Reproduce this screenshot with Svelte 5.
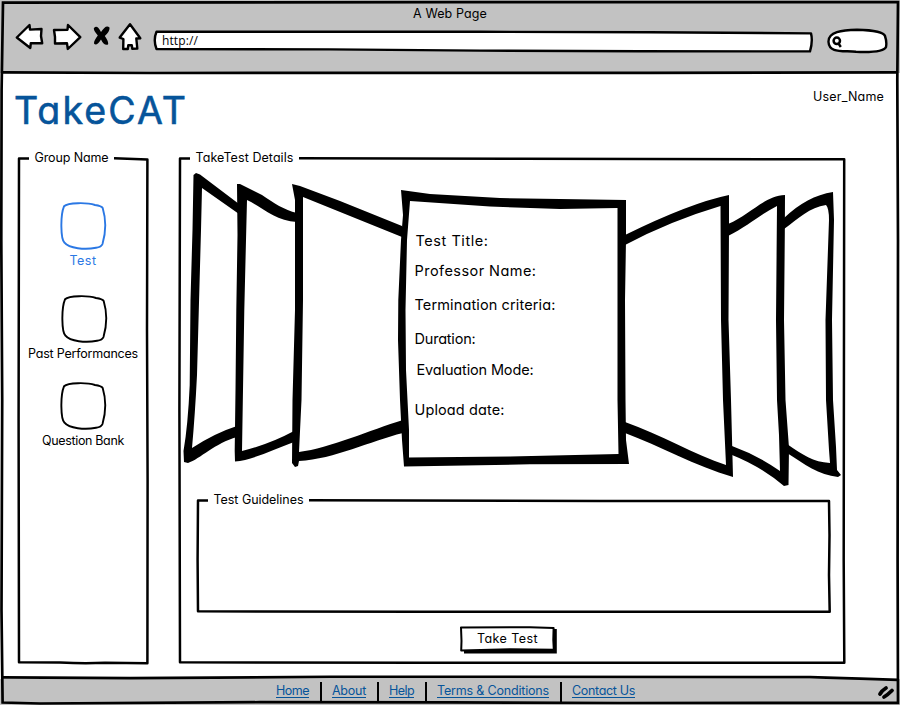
<script>
  const sections = [
    { label: 'Test', width: 27, gap: 0, shift: 0, active: true },
    { label: 'Past Performances', width: 110, gap: 27, shift: 1, active: false },
    { label: 'Question Bank', width: 82, gap: 21, shift: 0, active: false },
  ];

  const details = [
    { label: 'Test Title:', width: 73, indent: 1, gap: 0 },
    { label: 'Professor Name:', width: 122, indent: 0, gap: 10 },
    { label: 'Termination criteria:', width: 141, indent: 0, gap: 14 },
    { label: 'Duration:', width: 61, indent: 0, gap: 14 },
    { label: 'Evaluation Mode:', width: 117, indent: 2, gap: 11 },
    { label: 'Upload date:', width: 90, indent: 0, gap: 20 },
  ];

  const links = [
    { label: 'Home', width: 33 },
    { label: 'About', width: 34 },
    { label: 'Help', width: 25 },
    { label: 'Terms & Conditions', width: 112 },
    { label: 'Contact Us', width: 63 },
  ];

  // Spreads the letters of a label so that it fills the given width.
  function fit(node, width) {
    const natural = node.getBoundingClientRect().width;
    const count = node.textContent.length;
    node.style.letterSpacing = `${(width - natural) / count}px`;
    node.style.width = `${width}px`;
  }
</script>

<div class="page">
  <header>
    <div class="title"><span class="t" use:fit={74}>A Web Page</span></div>
    <div class="toolbar">
      <svg class="back" width="29" height="28" viewBox="15 23 29 28">
        <path class="ink" d="M16.8 37.5 L29.5 25 L30 29.6 L41.5 29 L41 36 L42.2 43.3 L30.8 43.2 L30.3 48 Z" />
      </svg>
      <svg class="forward" width="30" height="29" viewBox="52 22 30 29">
        <path class="ink" d="M54 30 L67.5 29.7 L68 25 L80.3 37.2 L67.8 49 L67 43.3 L55 43.5 L55 37 Z" />
      </svg>
      <svg class="stop" width="18" height="21" viewBox="93 25 18 21">
        <path d="M94 28 Q97 24 101 32 Q106 24 109.5 27.5 Q110 31 104.8 36 Q109 42 108 44.5 Q104 46 101 39.5 Q97 46 94.3 44 Q93 42 97.8 35.5 Q93 30 94 28Z" />
      </svg>
      <svg class="home" width="24" height="29" viewBox="118 22 24 29">
        <path class="ink" d="M130 24.3 L140.3 38.3 L136.3 38.5 L137.3 48.5 L132.3 48.8 L131.8 45.2 L128.3 45.2 L127.8 49 L123.2 49 L123.4 39 L119.7 37.6 Z" />
      </svg>
      <div class="url">
        <svg class="sketch" viewBox="153 30 660 23">
          <path class="ink" d="M156.5 31.8 L480 31.8 L650 32.2 L811 33.4 Q813 41 810 51.4 L640 51.3 L480 50.6 L330 49.4 L156.5 49 Q153 40 156.5 31.8Z" />
        </svg>
        <span class="http" use:fit={36}>http://</span>
      </div>
      <svg class="search" width="61" height="27" viewBox="827 27 61 27">
        <path class="ink" d="M828.5 42 C828 32 842 30 857 29.7 C875 30 884 33 885 36 Q887 42 886 47 C884 52 868 52.3 856 51.8 C842 50.5 829 53 828.5 42Z" />
        <circle cx="836.8" cy="40.8" r="3.2" fill="#fff" stroke="#000" stroke-width="2.5" />
        <path d="M838.5 43.5 L840.8 47" stroke="#000" stroke-width="2.4" />
      </svg>
    </div>
  </header>

  <main>
    <div class="masthead">
      <h1><span class="t" use:fit={174}>TakeCAT</span></h1>
      <span class="t user" use:fit={71}>User_Name</span>
    </div>

    <div class="columns">
      <nav class="panel group">
        <svg class="sketch" viewBox="18 150 130 514">
          <path class="line" d="M29 158.4 H19 L18.6 420 L19 662.3 L60 662.6 Q85 663.8 105 662.8 L147.4 663.2 L147.6 480 L147 330 L147.4 159.5 L114 158.3" />
        </svg>
        <div class="legend"><span class="t" use:fit={74}>Group Name</span></div>
        <ul>
          {#each sections as s}
            <li class:active={s.active} style:margin-top="{s.gap}px">
              <svg width="47" height="49" viewBox="60 201 47 49" style:margin-left="{s.shift * 2}px">
                <path d="M64 206.3 C68 202.5 87 202.3 95 205 Q101.5 206 102.7 208 C106 219 106 232 102.5 244 Q101.5 247 96 247.8 C85 250 69 248.5 64.5 242.7 C60.5 239 60.3 215 64 206.3Z" />
              </svg>
              <span class="t" use:fit={s.width}>{s.label}</span>
            </li>
          {/each}
        </ul>
      </nav>

      <section class="panel details">
        <svg class="sketch" viewBox="179 150 666 514">
          <path class="line" d="M190 158.4 H180 L179.4 410 L180 662.3 L420 662.8 L844.3 662.8 L843.7 560 L844.2 159.3 L520 158.8 L299 158.3" />
        </svg>
        <div class="legend"><span class="t" use:fit={98}>TakeTest Details</span></div>

        <div class="carousel">
          <svg class="sketch" viewBox="179 166 666 325">
            <g class="left">
              <path d="M193.5 175 L196 173 L200 174.5 L239 204 V214 L202 188 L201 230 L198.8 310 L197 375 Q195 415 192 448 Q215 433 237 426 V437 C215 443 200 459 188 463 L184 462 L183.5 451 Q188 425 189.7 385 L190.5 300 L192.5 230Z" />
              <path d="M237 184 L240 184 L262 195 C274 203 284 210 297 213 V222 C275 221 262 207 247 200 L246 240 L244.3 310 L242 451 Q270 444 294 431 V442 C273 450 252 460 235 461.5 L234.7 451 L235.5 390 L236.3 310 L237.5 235Z" />
              <path d="M292 184 L300 186 L340 201 L402 226 V237 L350 216 L303 197 L303 300 L301.5 400 L299 452 C330 448 370 430 403 420 V433 C370 441 335 459 299 461 L298 466 L295 467 L292 463 L292.5 400 L295 310 L295 200Z" />
            </g>
            <g class="right">
              <path d="M625 235 Q690 203 729 195 L729 230 L728.5 320 L731 400 L733 477 C695 466 660 446 625 433 V422 C660 434 695 455 726 465 L723 400 L721 320 L720.5 206 Q670 221 625 245Z" />
              <path d="M728 224 C750 215 764 196 785 195 L784.8 235 L784 320 L785.5 400 L789 448 L788.5 485 L784 486 Q760 466 732 455 V446 Q757 455 780 471 L779 435 L777 400 L776 320 L777 206 C761 214 748 226 728 236Z" />
              <path d="M784 218 C800 203 815 195 833 192 L834 220 L832 320 L833 400 L836 447 L837 470 L841 475 L838 477 C819 475 804 464 787 453 V444 C803 455 813 462 830 463 L829 450 L826 400 L825.5 320 L829 220 Q829 208 826 205 C810 207 798 219 784 229Z" />
            </g>
            <path class="center" fill-rule="evenodd" d="M401 190 L430 194 L500 198 L560 199 L626 200 L626 240 L625 300 L625.5 400 L626 440 L629 464 L530 464.3 L404 466.5 L402 440 L400 400 L398 340 L398.3 300 L401 240 L403 215Z M410 201 L407 240 L405.5 310 L406 370 L409 430 L409 457.5 L510 456.5 L618.5 454 L617.5 400 L617.5 208 L560 209 L490 206.5Z" />
          </svg>
          <dl>
            {#each details as d}
              <dt style:margin-top="{d.gap}px" style:padding-left="{d.indent}px"><span class="t" use:fit={d.width}>{d.label}</span></dt>
            {/each}
          </dl>
        </div>

        <div class="panel guidelines">
          <svg class="sketch" viewBox="197 492 633 120">
            <path class="line" d="M208 500.4 H198 L197.6 560 L198 611.3 L420 611.8 L829.7 611.8 L829 575 L829.5 535 L829 501 L600 500.9 L309 500.2" />
          </svg>
          <div class="legend"><span class="t" use:fit={90}>Test Guidelines</span></div>
        </div>

        <button>
          <svg class="sketch" viewBox="460 626 97 28">
            <path d="M464 629 H556.8 V653.5 H464Z" />
            <path class="line face" d="M461 627.5 L530 627.3 L553.6 628 L553.3 640 L553.8 649.8 L510 649.3 L461.2 650.5 L461.5 641Z" />
          </svg>
          <span class="t" use:fit={61}>Take Test</span>
        </button>
      </section>
    </div>
  </main>

  <footer>
    {#each links as l}
      <div class="link"><a class="t" href="#top" use:fit={l.width}>{l.label}</a></div>
    {/each}
  </footer>

  <svg class="sketch frame" viewBox="0 0 900 705">
    <path d="M3 2.7 L450 2.2 L898 2.2 L897.3 80 L898 240 L897.6 560 L898 702.8 L620 703 L450 702.4 L260 702.2 L40 703.5 L2.6 702.5 L1.5 610 L2.2 400 L1.3 240 L1.6 90Z" />
    <path d="M3 72.3 L150 73 L330 72.9 L650 72.9 L898 72.3" />
    <path d="M3 677.4 L130 678.2 L330 676.8 L810 677.2 L860 678.6 L898 679.8" />
    <path class="grip" d="M880 694 Q882 690.5 886 688 M884 697 Q888 694.5 892 690.5" />
  </svg>
</div>

<style>
  :global(body) {
    margin: 0;
    background: #fff;
  }

  .page {
    position: relative;
    display: flex;
    flex-direction: column;
    width: 900px;
    height: 705px;
    overflow: hidden;
    background: #fff;
    color: #000;
    font: 12.5px/18px Inter, 'Noto Sans', sans-serif;
    font-feature-settings: 'cv11', 'calt' 0;
  }

  svg {
    display: block;
    flex: none;
  }

  .sketch {
    position: absolute;
    inset: 0;
    width: 100%;
    height: 100%;
    overflow: visible;
    pointer-events: none;
  }

  .t,
  .http {
    display: inline-block;
    position: relative;
    white-space: nowrap;
  }

  .ink {
    fill: #fff;
    stroke: #000;
    stroke-width: 2.4;
    stroke-linejoin: round;
  }

  .line {
    fill: none;
    stroke: #000;
    stroke-width: 2.5;
    stroke-linejoin: round;
  }

  header {
    flex: none;
    height: 73px;
    box-sizing: border-box;
    padding-top: 5px;
    background: #c2c2c2;
  }

  .title {
    height: 17px;
    text-align: center;
  }

  .toolbar {
    display: flex;
    align-items: flex-start;
    padding-left: 15px;
  }

  .back {
    margin-top: 1px;
  }

  .forward {
    margin-left: 8px;
  }

  .stop {
    margin: 3px 0 0 11px;
  }

  .home {
    margin-left: 7px;
  }

  .url {
    position: relative;
    width: 660px;
    height: 23px;
    margin: 8px 0 0 11px;
  }

  .http {
    margin-left: 9px;
    font: 12px/21px 'Open Sans', sans-serif;
  }

  .search {
    margin: 5px 0 0 14px;
  }

  main {
    flex: 1;
    display: flex;
    flex-direction: column;
  }

  .masthead {
    display: flex;
    justify-content: space-between;
    height: 77px;
    box-sizing: border-box;
    padding: 15px 16px 0 14px;
  }

  h1 {
    margin: 0;
    color: #06549a;
    font-size: 37.5px;
    line-height: 45px;
    font-weight: 400;
    -webkit-text-stroke: 0.6px #06549a;
  }

  .columns {
    display: flex;
    gap: 31px;
    padding-left: 18px;
  }

  .panel {
    position: relative;
    box-sizing: border-box;
  }

  .legend {
    height: 16px;
    padding-left: 16.5px;
    margin-top: -1px;
  }

  .group {
    width: 130px;
    height: 514px;
  }

  ul {
    display: flex;
    flex-direction: column;
    margin: 36px 0 0;
    padding: 0;
    list-style: none;
  }

  li {
    display: flex;
    flex-direction: column;
    align-items: center;
    gap: 2px;
    height: 66px;
  }

  li path {
    fill: #fff;
    stroke: #000;
    stroke-width: 1.9;
  }

  li.active {
    color: #2b78e4;
  }

  li.active path {
    stroke: #2b78e4;
  }

  .details {
    display: flex;
    flex-direction: column;
    width: 666px;
    height: 514px;
  }

  .carousel {
    position: relative;
    height: 325px;
    margin-top: 1px;
  }

  dl {
    margin: 0;
    padding: 65px 0 0 235.5px;
    font-size: 14.5px;
    line-height: 20px;
  }

  dt {
    height: 20px;
  }

  .guidelines {
    width: 633px;
    height: 120px;
    margin: 1px 0 0 18px;
  }

  button {
    position: relative;
    width: 97px;
    height: 28px;
    margin: 14px 0 0 281px;
    padding: 0 2px 2px 0;
    border: 0;
    background: none;
    color: inherit;
    font: inherit;
    font-feature-settings: inherit;
  }

  .face {
    fill: #fff;
    stroke-width: 2;
  }

  footer {
    display: flex;
    flex: none;
    height: 26px;
    box-sizing: border-box;
    padding: 3px 0 0 276px;
    background: #c2c2c2;
  }

  .link {
    height: 20px;
    padding: 0 11px 0 10px;
    border-right: 2px solid #000;
  }

  .link:first-child {
    padding-left: 0;
  }

  .link:last-child {
    border: 0;
  }

  a {
    color: #06549a;
    text-decoration: underline;
    text-underline-offset: 2px;
    text-decoration-skip-ink: none;
  }

  .frame path {
    fill: none;
    stroke: #000;
    stroke-width: 2.7;
  }

  .frame .grip {
    stroke-width: 3.8;
    stroke-linecap: round;
  }
</style>
